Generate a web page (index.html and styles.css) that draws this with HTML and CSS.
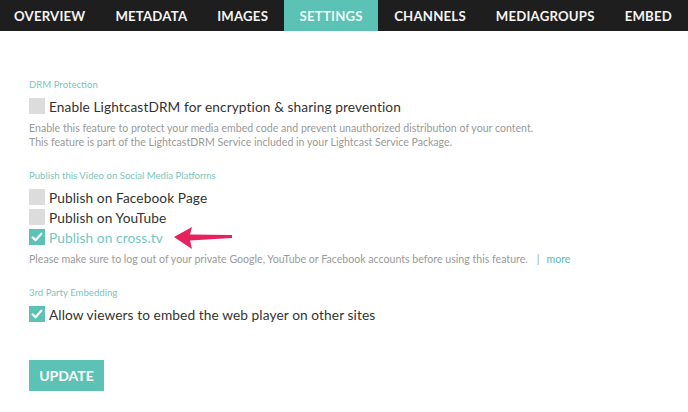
FILE: index.html
```html
<!DOCTYPE html>
<html>
<head>
<meta charset="utf-8">
<link rel="stylesheet" href="styles.css">
</head>
<body>
<nav class="tabs">
  <span class="tab">OVERVIEW</span>
  <span class="tab">METADATA</span>
  <span class="tab">IMAGES</span>
  <span class="tab active">SETTINGS</span>
  <span class="tab">CHANNELS</span>
  <span class="tab">MEDIAGROUPS</span>
  <span class="tab">EMBED</span>
</nav>
<main class="content">
  <section class="group first">
    <div class="heading">DRM Protection</div>
    <div class="row"><span class="box"></span><span class="label">Enable LightcastDRM for encryption &amp; sharing prevention</span></div>
    <p class="desc">Enable this feature to protect your media embed code and prevent unauthorized distribution of your content.<br>This feature is part of the LightcastDRM Service included in your Lightcast Service Package.</p>
  </section>
  <section class="group">
    <div class="heading">Publish this Video on Social Media Platforms</div>
    <div class="row"><span class="box"></span><span class="label">Publish on Facebook Page</span></div>
    <div class="row"><span class="box"></span><span class="label">Publish on YouTube</span></div>
    <div class="row"><span class="box checked"><svg viewBox="0 0 16 16" width="16" height="16"><path d="M3.6 8.4 L6.6 11.3 L12.4 4.6" fill="none" stroke="#fff" stroke-width="2.2" stroke-linecap="round" stroke-linejoin="round"/></svg></span><span class="label teal">Publish on cross.tv</span></div>
    <p class="desc">Please make sure to log out of your private Google, YouTube or Facebook accounts before using this feature.<span class="sep">|</span><span class="more">more</span></p>
  </section>
  <section class="group">
    <div class="heading">3rd Party Embedding</div>
    <div class="row"><span class="box checked"><svg viewBox="0 0 16 16" width="16" height="16"><path d="M3.6 8.4 L6.6 11.3 L12.4 4.6" fill="none" stroke="#fff" stroke-width="2.2" stroke-linecap="round" stroke-linejoin="round"/></svg></span><span class="label">Allow viewers to embed the web player on other sites</span></div>
  </section>
  <button class="update">UPDATE</button>
</main>
<svg class="arrow" viewBox="0 0 64 26" width="64" height="26"><path d="M2 12 L20 2 L18 9.5 L60 10 L60 13 L18 15.5 L20 24 Z" fill="#e8205e"/></svg>
</body>
</html>
```
FILE: styles.css
```css
* { box-sizing: border-box; }
html, body { margin: 0; padding: 0; background: #fff; }
body { font-family: "Lato", "DejaVu Sans", sans-serif; color: #333; position: relative; width: 688px; height: 412px; overflow: hidden; }
.tabs { display: flex; justify-content: space-between; height: 31px; padding-right: 2px; background: #1e1e1e; align-items: stretch; }
.tab { display: flex; align-items: center; padding: 0 14px; color: #f4f4f4; font-weight: 700; font-size: 13.2px; letter-spacing: 0.2px; }
.tab.active { background: #5cc2b6; color: #eafaf7; padding: 0 15.5px; }
.content { padding: 47px 0 0 29px; }
.group { margin-top: 20px; }
.group.first { margin-top: 0; }
.heading { font-size: 9.6px; line-height: 14px; color: #7cc6bd; margin-bottom: 4px; }
.row { display: flex; align-items: center; height: 20px; }
.box { width: 16px; height: 16px; background: #dcdcdc; margin-right: 4px; display: flex; }
.box.checked { background: #5cc2b6; }
.label { font-size: 13.7px; color: #333; letter-spacing: 0.1px; }
.label.teal { color: #74c7bd; }
.desc { margin: 5px 0 0 0; font-size: 10.6px; line-height: 14px; color: #9a9a9a; }
.sep { color: #9a9a9a; margin: 0 7px 0 9px; }
.more { color: #5cb8ad; }
.update { margin-top: 36px; width: 75px; height: 31px; border: 0; background: #5cc2b6; color: #fff; font-family: "Lato", "DejaVu Sans", sans-serif; font-weight: 700; font-size: 14px; padding: 0; }
.arrow { position: absolute; left: 172px; top: 225px; }
```
